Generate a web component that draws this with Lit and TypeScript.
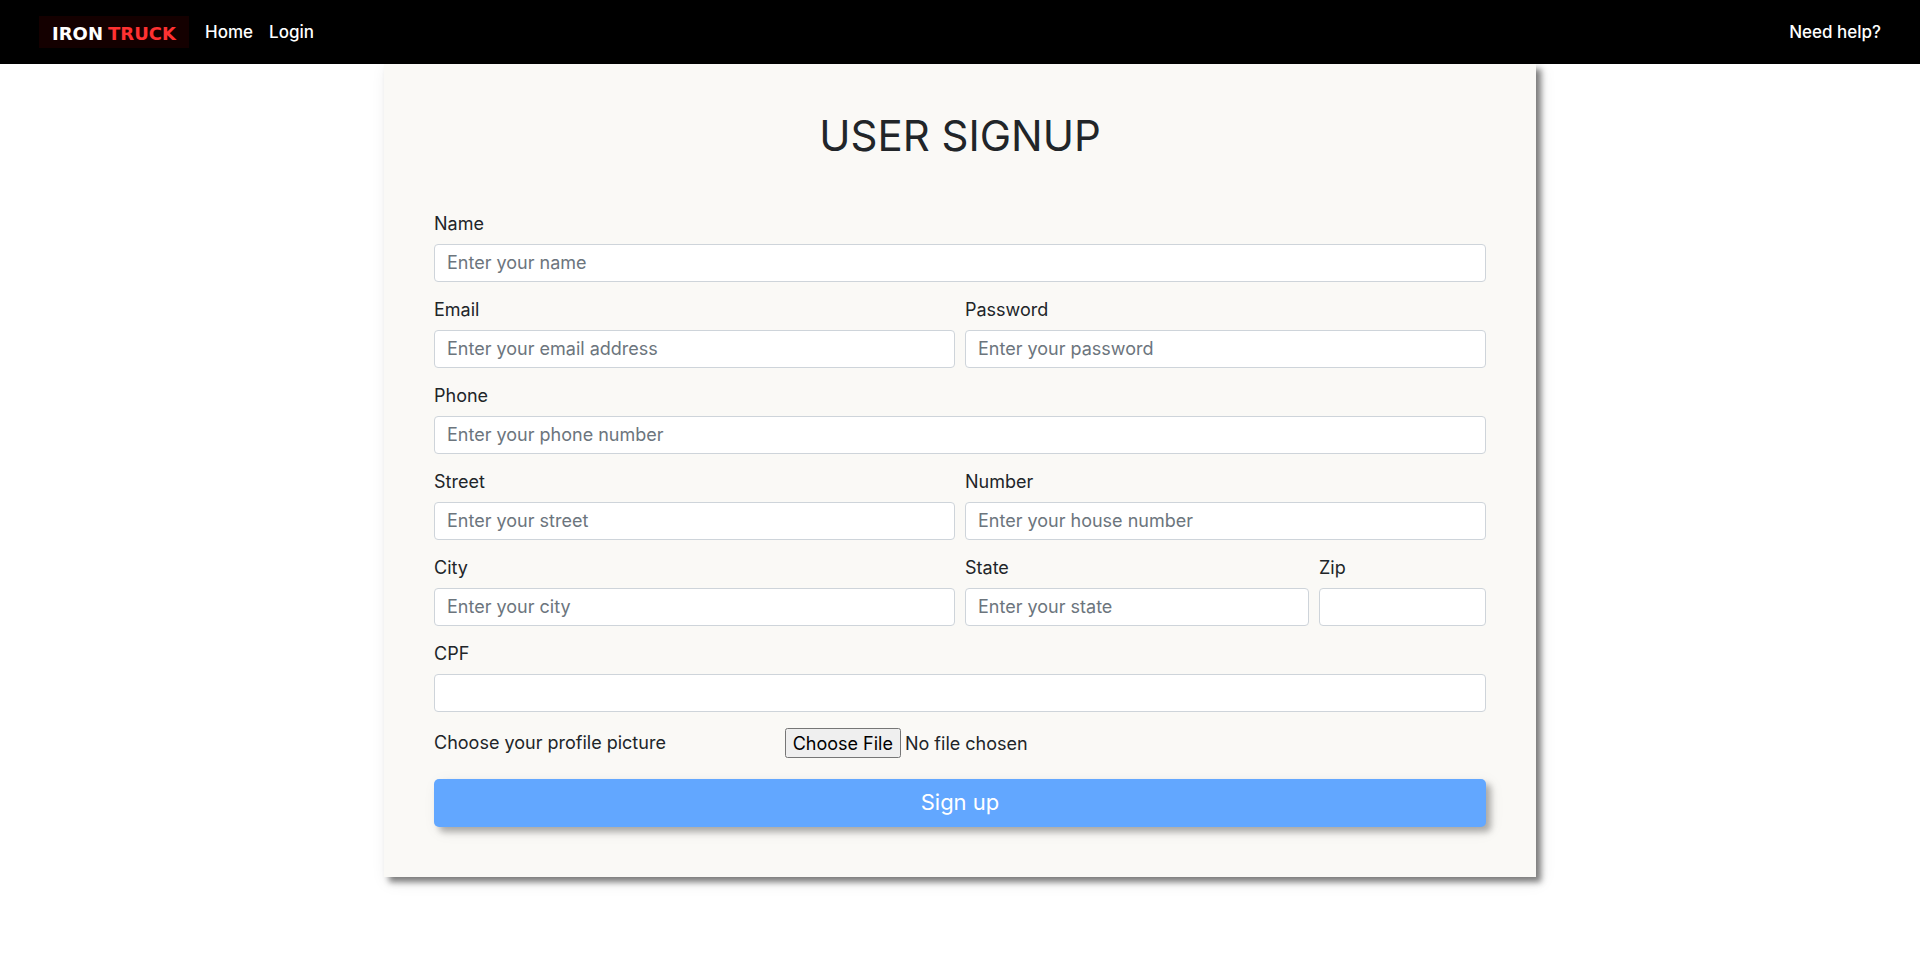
import { LitElement, html, css } from "lit";
import { customElement } from "lit/decorators.js";

interface Field {
  id: string;
  label: string;
  placeholder: string;
  type: string;
  size: "full" | "half" | "third" | "sixth";
}

const FIELDS: Field[] = [
  { id: "name", label: "Name", placeholder: "Enter your name", type: "text", size: "full" },
  { id: "email", label: "Email", placeholder: "Enter your email address", type: "email", size: "half" },
  { id: "password", label: "Password", placeholder: "Enter your password", type: "password", size: "half" },
  { id: "phone", label: "Phone", placeholder: "Enter your phone number", type: "tel", size: "full" },
  { id: "street", label: "Street", placeholder: "Enter your street", type: "text", size: "half" },
  { id: "number", label: "Number", placeholder: "Enter your house number", type: "text", size: "half" },
  { id: "city", label: "City", placeholder: "Enter your city", type: "text", size: "half" },
  { id: "state", label: "State", placeholder: "Enter your state", type: "text", size: "third" },
  { id: "zip", label: "Zip", placeholder: "", type: "text", size: "sixth" },
  { id: "cpf", label: "CPF", placeholder: "", type: "text", size: "full" },
];

@customElement("site-nav")
export class SiteNav extends LitElement {
  static styles = css`
    :host {
      display: block;
      position: relative;
    }
    .bar {
      display: flex;
      align-items: center;
      gap: 16px;
      box-sizing: border-box;
      min-height: 64px;
      padding: 0 39px;
      background: #000;
      font-size: 17px;
      font-weight: 500;
    }
    .link {
      color: #fff;
      text-decoration: none;
    }
    .brand {
      display: flex;
      align-items: center;
      justify-content: center;
      gap: 5px;
      box-sizing: border-box;
      width: 150px;
      height: 32px;
      padding-top: 4px;
      background: #140000;
      color: #fff;
      font-family: "DejaVu Sans", sans-serif;
      font-weight: 700;
      font-size: 18px;
      text-decoration: none;
    }
    .accent {
      color: #ff3131;
    }
    .help {
      margin-left: auto;
    }
  `;

  render() {
    return html`
      <nav class="bar">
        <a class="brand" href="#"><span>IRON</span><span class="accent">TRUCK</span></a>
        <a class="link" href="#">Home</a>
        <a class="link" href="#">Login</a>
        <a class="link help" href="#">Need help?</a>
      </nav>
    `;
  }
}

@customElement("signup-form")
export class SignupForm extends LitElement {
  static styles = css`
    :host {
      display: block;
    }
    .card {
      box-sizing: border-box;
      width: 60%;
      margin: 0 auto;
      padding: 48px 50px 50px;
      background: #faf9f6;
      box-shadow: 5px 5px 6px rgba(0, 0, 0, 0.48), 4px 4px 16px rgba(0, 0, 0, 0.1);
    }
    .title {
      margin: 0 0 52px;
      font-size: 42px;
      line-height: 48px;
      font-weight: 400;
      text-align: center;
    }
    .fields {
      display: grid;
      grid-template-columns: repeat(12, minmax(0, 1fr));
      gap: 16px 10px;
    }
    .field {
      display: flex;
      flex-direction: column;
      gap: 8px;
    }
    .full {
      grid-column: span 12;
    }
    .half {
      grid-column: span 6;
    }
    .third {
      grid-column: span 4;
    }
    .sixth {
      grid-column: span 2;
    }
    .input {
      box-sizing: border-box;
      width: 100%;
      height: 38px;
      padding: 5px 12px 7px;
      border: 1px solid #ced4da;
      border-radius: 4px;
      background: #fff;
      color: #495057;
      font: inherit;
    }
    .input::placeholder {
      color: #6c757d;
      opacity: 1;
    }
    .upload {
      display: grid;
      grid-template-columns: 1fr 2fr;
      align-items: center;
      margin: 16px 0 21px;
    }
    .file {
      height: 30px;
      font: inherit;
      color: inherit;
    }
    .file::file-selector-button {
      height: 30px;
      font: inherit;
    }
    .submit {
      display: block;
      width: 100%;
      padding: 7px 16px 9px;
      border: 0;
      border-radius: 5px;
      background: #62a7ff;
      color: #fff;
      font: inherit;
      font-size: 22px;
      line-height: 32px;
      box-shadow: 5px 5px 6px rgba(0, 0, 0, 0.28), 4px 4px 16px rgba(0, 0, 0, 0.08);
    }
  `;

  render() {
    return html`
      <form class="card">
        <h1 class="title">USER SIGNUP</h1>
        <div class="fields">
          ${FIELDS.map(
            (f) => html`
              <div class="field ${f.size}">
                <label for=${f.id}>${f.label}</label>
                <input class="input" id=${f.id} type=${f.type} placeholder=${f.placeholder} />
              </div>
            `
          )}
        </div>
        <div class="upload">
          <label for="picture">Choose your profile picture</label>
          <input class="file" id="picture" type="file" />
        </div>
        <button class="submit" type="button">Sign up</button>
      </form>
    `;
  }
}

@customElement("app-root")
export class AppRoot extends LitElement {
  static styles = css`
    :host {
      display: block;
      min-height: 100vh;
      background: #fff;
      color: #212529;
      font: 400 18px/24px Inter, sans-serif;
    }
    .nav {
      z-index: 1;
    }
  `;

  render() {
    return html`
      <site-nav class="nav"></site-nav>
      <main><signup-form></signup-form></main>
    `;
  }
}
